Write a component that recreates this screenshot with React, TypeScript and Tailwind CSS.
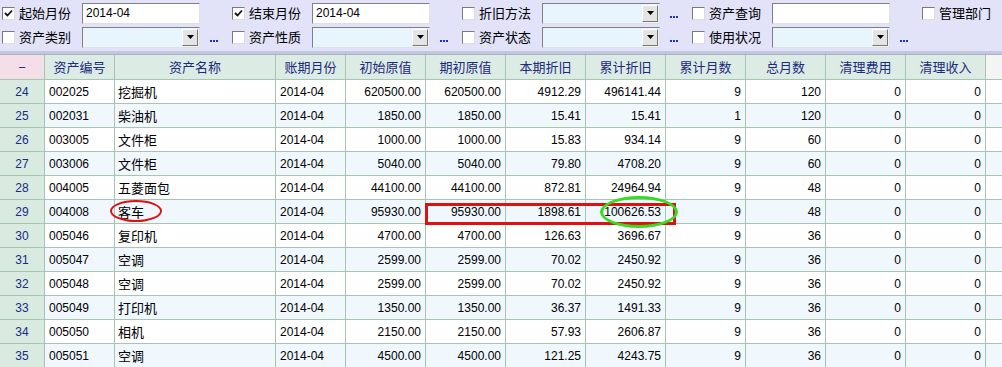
import React from 'react'

const cols = 'grid grid-cols-[45px_70px_161px_70px_80px_80px_80px_80px_80px_80px_80px_80px]'

const headers = ['资产编号', '资产名称', '账期月份', '初始原值', '期初原值', '本期折旧', '累计折旧', '累计月数', '总月数', '清理费用', '清理收入']

const rows: string[][] = [
  ['24', '002025', '挖掘机', '2014-04', '620500.00', '620500.00', '4912.29', '496141.44', '9', '120', '0', '0'],
  ['25', '002031', '柴油机', '2014-04', '1850.00', '1850.00', '15.41', '15.41', '1', '120', '0', '0'],
  ['26', '003005', '文件柜', '2014-04', '1000.00', '1000.00', '15.83', '934.14', '9', '60', '0', '0'],
  ['27', '003006', '文件柜', '2014-04', '5040.00', '5040.00', '79.80', '4708.20', '9', '60', '0', '0'],
  ['28', '004005', '五菱面包', '2014-04', '44100.00', '44100.00', '872.81', '24964.94', '9', '48', '0', '0'],
  ['29', '004008', '客车', '2014-04', '95930.00', '95930.00', '1898.61', '100626.53', '9', '48', '0', '0'],
  ['30', '005046', '复印机', '2014-04', '4700.00', '4700.00', '126.63', '3696.67', '9', '36', '0', '0'],
  ['31', '005047', '空调', '2014-04', '2599.00', '2599.00', '70.02', '2450.92', '9', '36', '0', '0'],
  ['32', '005048', '空调', '2014-04', '2599.00', '2599.00', '70.02', '2450.92', '9', '36', '0', '0'],
  ['33', '005049', '打印机', '2014-04', '1350.00', '1350.00', '36.37', '1491.33', '9', '36', '0', '0'],
  ['34', '005050', '相机', '2014-04', '2150.00', '2150.00', '57.93', '2606.87', '9', '36', '0', '0'],
  ['35', '005051', '空调', '2014-04', '4500.00', '4500.00', '121.25', '4243.75', '9', '36', '0', '0'],
]

function Check({ checked }: { checked?: boolean }) {
  return (
    <span className="w-[13px] h-[13px] bg-white border border-[#7a7a7a] border-r-[#dcdcdc] border-b-[#dcdcdc] flex items-center justify-center shrink-0">
      {checked && (
        <svg width="9" height="9" viewBox="0 0 9 9">
          <path d="M1 4 L3.5 6.5 L8 1.5" stroke="#111" strokeWidth="1.8" fill="none" />
        </svg>
      )}
    </span>
  )
}

function Dots() {
  return (
    <span className="flex gap-[1px] items-end h-[10px]">
      <span className="w-[2px] h-[2px] bg-[#2030c0]" />
      <span className="w-[2px] h-[2px] bg-[#2030c0]" />
      <span className="w-[2px] h-[2px] bg-[#2030c0]" />
    </span>
  )
}

function Field({ label, checked, value, select, dots }: { label: string; checked?: boolean; value?: string; select?: boolean; dots?: boolean }) {
  return (
    <div className="flex items-center w-[230px] h-[24px] shrink-0">
      <div className="flex items-center w-[80px] shrink-0 gap-[4px]">
        <Check checked={checked} />
        <span className="text-[13px] text-black">{label}</span>
      </div>
      {value !== undefined && (
        <div className={`w-[118px] h-[21px] shrink-0 flex items-center border border-[#808080] border-r-[#e0e0e0] border-b-[#e0e0e0] ${select ? 'bg-[#e8f5fd]' : 'bg-white'}`}>
          <span className="flex-1 pl-[3px] text-[12px] font-['Liberation_Sans'] text-black">{select ? '' : value}</span>
          {select && (
            <span className="w-[16px] h-[17px] mr-[1px] bg-[#e4e4e4] border border-white border-r-[#777] border-b-[#777] flex items-center justify-center">
              <svg width="7" height="4" viewBox="0 0 7 4"><path d="M0 0 H7 L3.5 4 Z" fill="#000" /></svg>
            </span>
          )}
        </div>
      )}
      {dots && (
        <span className="ml-[10px]">
          <Dots />
        </span>
      )}
    </div>
  )
}

export default function App() {
  return (
    <div className="w-[1002px] h-[367px] overflow-hidden bg-[#f4f4f4] font-['Noto_Sans_CJK_SC',sans-serif] relative">
      <div className="bg-[#e2e2f8] h-[51px] pt-[1px] pl-[2px] flex flex-col overflow-hidden">
        <div className="flex">
          <Field label="起始月份" checked value="2014-04" />
          <Field label="结束月份" checked value="2014-04" />
          <Field label="折旧方法" value="" select dots />
          <Field label="资产查询" value="" />
          <Field label="管理部门" />
        </div>
        <div className="flex">
          <Field label="资产类别" value="" select dots />
          <Field label="资产性质" value="" select dots />
          <Field label="资产状态" value="" select dots />
          <Field label="使用状况" value="" select dots />
        </div>
      </div>
      <div className="h-[4px] bg-[#c3c8dc] border-b border-[#a9b0c8]" />
      <div className={`${cols} h-[25px] border-b border-[#a6c6b1]`}>
        <div className="bg-[#f4dfe9] border-r border-[#a6c6b1] flex items-center justify-center text-[13px] text-[#1c2a80]">−</div>
        {headers.map((h) => (
          <div key={h} className="bg-[#dcebe3] border-r border-[#a6c6b1] flex items-center justify-center text-[13px] text-[#1c2a80]">
            {h}
          </div>
        ))}
      </div>
      {rows.map((r, i) => (
        <div key={r[0]} className={`${cols} h-[24px] border-b border-[#a6c6b1] ${i % 2 ? 'bg-[#f0f8fd]' : 'bg-white'}`}>
          {r.map((c, j) => (
            <div
              key={j}
              className={`border-r border-[#a6c6b1] flex items-center overflow-hidden whitespace-nowrap ${
                j === 0
                  ? 'bg-[#d9eae1] justify-center text-[12px] text-[#1c2a80] font-["Liberation_Sans"]'
                  : j === 2
                  ? 'pl-[3px] text-[13px] text-black'
                  : j < 4
                  ? 'pl-[4px] text-[12px] text-black font-["Liberation_Sans"]'
                  : 'justify-end pr-[4px] text-[12px] text-black font-["Liberation_Sans"]'
              }`}
            >
              {c}
            </div>
          ))}
        </div>
      ))}
      {/* annotations */}
      <div className="absolute left-[110px] top-[200px] w-[52px] h-[22px] border-[2px] border-[#e01010] rounded-[50%]" />
      <div className="absolute left-[425px] top-[203px] w-[251px] h-[22px] border-[3px] border-[#e01010]" />
      <div className="absolute left-[600px] top-[196px] w-[78px] h-[32px] border-[3px] border-[#33dd22] rounded-[50%]" />
    </div>
  )
}
